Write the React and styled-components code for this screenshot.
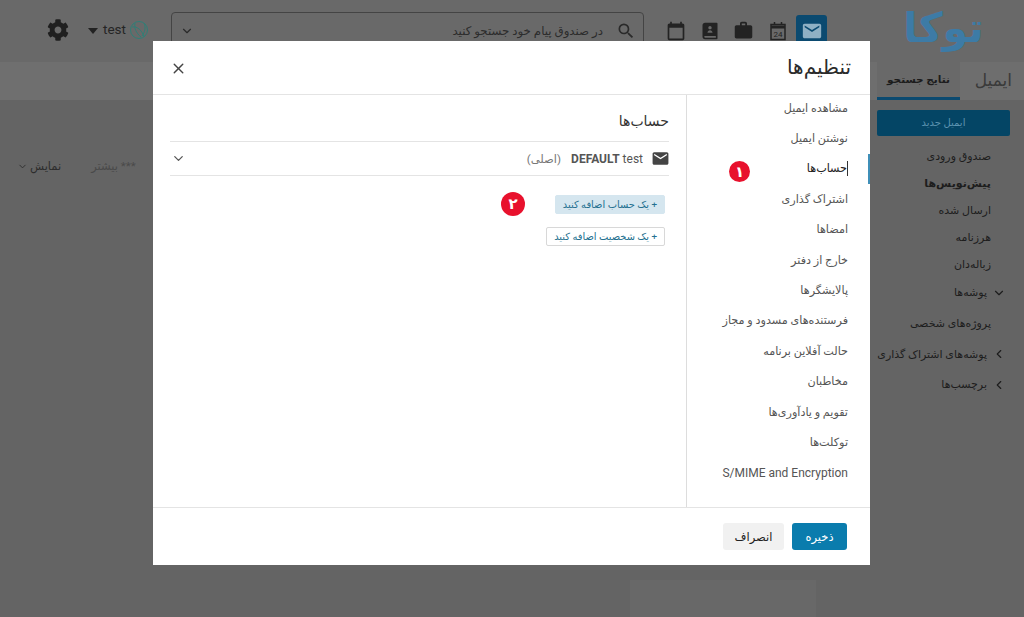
import React from "react";
import styled, { createGlobalStyle } from "styled-components";
import { ChevronDown, ChevronLeft, X } from "lucide-react";
import { FaCog } from "react-icons/fa";
import { MdCalendarToday, MdEmail, MdSearch, MdWork } from "react-icons/md";
import { RiContactsBook2Fill } from "react-icons/ri";

const FONT = `Roboto, "DejaVu Sans", sans-serif`;

const GlobalStyle = createGlobalStyle`
    html, body {
        margin: 0;
        height: 100%;
        overflow: hidden;
        background: #636363;
    }
    body {
        font-family: ${FONT};
        direction: rtl;
    }
`;

const Page = styled.div`
    width: 1024px;
    height: 617px;
    display: flex;
    flex-direction: column;
    background: #646464;
    overflow: hidden;
`;

const Header = styled.header`
    height: 62px;
    flex: none;
    display: flex;
    align-items: flex-start;
    background: #696969;
    padding-right: 38px;
    box-sizing: border-box;
`;

const Logo = styled.div`
    width: 85px;
    margin-top: 2px;
    font-size: 41px;
    line-height: 52px;
    font-weight: 700;
    color: #3d7ba6;
    text-align: center;
`;

const AppIcons = styled.nav`
    display: flex;
    align-items: center;
    gap: 3px;
    margin: 15px 74px 0 0;
`;

const AppIcon = styled.div`
    width: 31px;
    height: 31px;
    display: flex;
    align-items: center;
    justify-content: center;
    border-radius: 3px;
    color: ${(p) => (p.$active ? "#8fb0c4" : "#232323")};
    background: ${(p) => (p.$active ? "#0b4a70" : "transparent")};
    font-size: ${(p) => p.$size || 20}px;
`;

const SearchBox = styled.div`
    width: 473px;
    height: 38px;
    margin: 12px 16px 0 0;
    display: flex;
    align-items: center;
    box-sizing: border-box;
    padding: 0 7px 0 8px;
    border: 1px solid #444444;
    border-radius: 4px;
    color: #2a2a2a;
`;

const SearchText = styled.span`
    flex: 1;
    margin-right: 13px;
    font-size: 11.8px;
    color: #2c2c2c;
`;

const Avatar = styled.svg`
    width: 20px;
    height: 20px;
    margin: 20px 22px 0 0;
    flex: none;
`;

const UserName = styled.span`
    margin: 19px 3px 0 0;
    font-size: 13.5px;
    line-height: 20px;
    color: #252525;
`;

const Caret = styled.span`
    width: 0;
    height: 0;
    margin: 28px 5px 0 0;
    border-left: 5px solid transparent;
    border-right: 5px solid transparent;
    border-top: 6px solid #222222;
`;

const Gear = styled.div`
    margin: 19px 19px 0 0;
    font-size: 22px;
    line-height: 22px;
    color: #1f1f1f;
`;

const Columns = styled.div`
    flex: 1;
    display: flex;
    min-height: 0;
`;

const Sidebar = styled.aside`
    width: 154px;
    flex: none;
    box-sizing: border-box;
`;

const Tabs = styled.div`
    height: 38px;
    display: flex;
    align-items: stretch;
    padding-right: 12px;
    background: #6e6e6e;
`;

const Tab = styled.div`
    box-sizing: border-box;
    width: ${(p) => (p.$active ? "83px" : "52px")};
    font-size: ${(p) => (p.$active ? "10.5px" : "17px")};
    line-height: 36px;
    font-weight: ${(p) => (p.$active ? 700 : 400)};
    color: ${(p) => (p.$active ? "#1c1c1c" : "#3a3a3a")};
    text-align: ${(p) => (p.$active ? "center" : "right")};
    background: ${(p) => (p.$active ? "#696969" : "transparent")};
    border-bottom: ${(p) => (p.$active ? "3px solid #0b4a70" : "none")};
    white-space: nowrap;
`;

const NewMail = styled.div`
    height: 26px;
    margin: 10px 14px 0 7px;
    border-radius: 2px;
    background: #044565;
    color: #5d93b0;
    font-size: 10px;
    line-height: 26px;
    text-align: center;
`;

const FolderList = styled.div`
    margin-top: 6.5px;
    display: flex;
    flex-direction: column;
`;

const Folder = styled.div`
    height: ${(p) => (p.$tall ? "30.7px" : "27px")};
    display: flex;
    align-items: center;
    gap: 5px;
    padding-right: ${(p) => (p.$arrow ? "18px" : "33px")};
    font-size: 11px;
    font-weight: ${(p) => (p.$bold ? 700 : 400)};
    color: #1d1d1d;
    white-space: nowrap;

    svg {
        flex: none;
    }
`;

const Main = styled.main`
    flex: 1;
    display: flex;
    flex-direction: column;
`;

const Band = styled.div`
    height: 38px;
    background: #6f6f6f;
`;

const MainToolbar = styled.div`
    display: flex;
    justify-content: flex-end;
    align-items: center;
    gap: 30px;
    margin-top: 59px;
    padding-left: 17px;
    font-size: 11.5px;
    color: #2d2d2d;
`;

const MutedTool = styled.span`
    color: #4a4a4a;
`;

const ToolButton = styled.span`
    display: flex;
    align-items: center;
    gap: 2px;
`;

const FooterPatch = styled.div`
    margin-top: auto;
    align-self: flex-start;
    width: 186px;
    height: 37px;
    margin-right: 54px;
    background: #686868;
`;

const Modal = styled.section`
    position: fixed;
    left: 153px;
    top: 41px;
    width: 717px;
    height: 524px;
    display: flex;
    flex-direction: column;
    background: #ffffff;
`;

const ModalHeader = styled.div`
    height: 54px;
    flex: none;
    box-sizing: border-box;
    display: flex;
    align-items: center;
    justify-content: space-between;
    padding: 0 19px 2px 17px;
    border-bottom: 1px solid #e4e4e4;
`;

const ModalTitle = styled.h1`
    margin: 0;
    font-size: 20px;
    font-weight: 400;
    color: #2b2b2b;
`;

const CloseIcon = styled(X)`
    margin-top: 3px;
    color: #444444;
`;

const ModalBody = styled.div`
    flex: 1;
    display: flex;
    min-height: 0;
`;

const SettingsNav = styled.nav`
    width: 184px;
    flex: none;
    box-sizing: border-box;
    border-left: 1px solid #dddddd;
    display: flex;
    flex-direction: column;
`;

const NavItem = styled.div`
    height: 30.4px;
    flex: none;
    box-sizing: border-box;
    display: flex;
    align-items: center;
    position: relative;
    top: -2px;
    padding-right: 20px;
    font-size: ${(p) => (p.$latin ? "12px" : "11.2px")};
    white-space: nowrap;
    color: ${(p) => (p.$active ? "#222222" : "#555555")};
    border-right: 2px solid ${(p) => (p.$active ? "#3f8fb8" : "transparent")};
`;

const TextCursor = styled.span`
    display: inline-block;
    width: 1px;
    height: 15px;
    background: #333333;
`;

const AccountsPanel = styled.div`
    flex: 1;
    position: relative;
    box-sizing: border-box;
    padding: 0 17px;
`;

const PanelTitle = styled.h2`
    margin: 0;
    height: 46px;
    box-sizing: border-box;
    padding-top: 16px;
    font-size: 14px;
    line-height: 20px;
    font-weight: 400;
    color: #333333;
`;

const AccountRow = styled.div`
    height: 35px;
    box-sizing: border-box;
    display: flex;
    align-items: center;
    border-top: 1px solid #e4e4e4;
    border-bottom: 1px solid #e4e4e4;
    color: #555555;
`;

const AccountMail = styled(MdEmail)`
    font-size: 19px;
    color: #444444;
    margin-right: -1px;
`;

const AccountName = styled.span`
    direction: ltr;
    margin-right: 8px;
    font-size: 12px;
    color: #555555;
`;

const Primary = styled.span`
    margin-right: 10px;
    font-size: 11.5px;
    color: #777777;
`;

const RowChevron = styled(ChevronDown)`
    margin-right: auto;
    margin-left: 1px;
    color: #555555;
`;

const AddButtons = styled.div`
    display: flex;
    flex-direction: column;
    align-items: flex-start;
    gap: 13px;
    margin: 19px 4px 0 0;
`;

const AddButton = styled.div`
    height: 19px;
    box-sizing: border-box;
    padding: 0 7px;
    display: flex;
    align-items: center;
    border-radius: 2px;
    font-size: 9.9px;
    white-space: nowrap;
    color: #23708f;
    background: ${(p) => (p.$primary ? "#d5e6ef" : "#ffffff")};
    border: 1px solid ${(p) => (p.$primary ? "#d5e6ef" : "#d8d8d8")};
`;

const Badge = styled.span`
    position: absolute;
    width: ${(p) => p.$size}px;
    height: ${(p) => p.$size}px;
    display: flex;
    align-items: center;
    justify-content: center;
    border-radius: 50%;
    background: #e8112d;
    color: #ffffff;
    font-size: 15px;
    font-weight: 700;
`;

const AccountBadge = styled(Badge)`
    left: 348px;
    top: 97px;
`;

const NavBadge = styled(Badge)`
    left: 576px;
    top: 66px;
`;

const ModalFooter = styled.div`
    height: 58px;
    flex: none;
    box-sizing: border-box;
    display: flex;
    align-items: center;
    gap: 8px;
    padding: 0 23px;
    border-top: 1px solid #e4e4e4;
`;

const FooterButton = styled.button`
    height: 27px;
    width: ${(p) => (p.$primary ? "55px" : "61px")};
    padding: 0;
    border: none;
    border-radius: 3px;
    font-family: ${FONT};
    font-size: 11.5px;
    color: ${(p) => (p.$primary ? "#ffffff" : "#222222")};
    background: ${(p) => (p.$primary ? "#0a7cad" : "#f1f1f1")};
`;

const navItems = [
    "مشاهده ایمیل",
    "نوشتن ایمیل",
    "حساب‌ها",
    "اشتراک گذاری",
    "امضاها",
    "خارج از دفتر",
    "پالایشگرها",
    "فرستنده‌های مسدود و مجاز",
    "حالت آفلاین برنامه",
    "مخاطبان",
    "تقویم و یادآوری‌ها",
    "توکلت‌ها",
    "S/MIME and Encryption",
];

function DayIcon() {
    return (
        <svg width="18" height="20" viewBox="0 0 18 20" fill="none" stroke="#232323">
            <rect x="2" y="3.5" width="14" height="15" strokeWidth="1.5" />
            <path d="M2 6h14" strokeWidth="3" />
            <path d="M5.5 1v3M12.5 1v3" strokeWidth="1.5" />
            <text x="9" y="16" fontSize="8" fill="#232323" stroke="none" textAnchor="middle" fontFamily="Roboto, sans-serif">24</text>
        </svg>
    );
}

function App() {
    return (
        <Page>
            <GlobalStyle />
            <Header>
                <Logo>توکا</Logo>
                <AppIcons>
                    <AppIcon $active $size={22}><MdEmail /></AppIcon>
                    <AppIcon><DayIcon /></AppIcon>
                    <AppIcon $size={21}><MdWork /></AppIcon>
                    <AppIcon><RiContactsBook2Fill /></AppIcon>
                    <AppIcon><MdCalendarToday /></AppIcon>
                </AppIcons>
                <SearchBox>
                    <MdSearch size={20} />
                    <SearchText>در صندوق پیام خود جستجو کنید</SearchText>
                    <ChevronDown size={14} />
                </SearchBox>
                <Avatar viewBox="0 0 20 20" fill="none" stroke="#2f7f77" strokeWidth="1">
                    <circle cx="10" cy="10" r="8.5" />
                    <path d="M3 7c5-1 10 3 12 10M15 3c2 4 1 9-2 13M6 3c-1 5 1 10 6 14" />
                </Avatar>
                <UserName>test</UserName>
                <Caret />
                <Gear><FaCog /></Gear>
            </Header>
            <Columns>
                <Sidebar>
                    <Tabs>
                        <Tab>ایمیل</Tab>
                        <Tab $active>نتایج جستجو</Tab>
                    </Tabs>
                    <NewMail>ایمیل جدید</NewMail>
                    <FolderList>
                        <Folder>صندوق ورودی</Folder>
                        <Folder $bold>پیش‌نویس‌ها</Folder>
                        <Folder>ارسال شده</Folder>
                        <Folder>هرزنامه</Folder>
                        <Folder>زباله‌دان</Folder>
                        <Folder $arrow $tall><ChevronDown size={14} />پوشه‌ها</Folder>
                        <Folder $tall>پروژه‌های شخصی</Folder>
                        <Folder $arrow $tall><ChevronLeft size={14} />پوشه‌های اشتراک گذاری</Folder>
                        <Folder $arrow $tall><ChevronLeft size={14} />برچسب‌ها</Folder>
                    </FolderList>
                </Sidebar>
                <Main>
                    <Band />
                    <MainToolbar>
                        <MutedTool>*** بیشتر</MutedTool>
                        <ToolButton>نمایش <ChevronDown size={11} /></ToolButton>
                    </MainToolbar>
                    <FooterPatch />
                </Main>
            </Columns>
            <Modal>
                <ModalHeader>
                    <ModalTitle>تنظیم‌ها</ModalTitle>
                    <CloseIcon size={17} />
                </ModalHeader>
                <ModalBody>
                    <SettingsNav>
                        {navItems.map((item) => (
                            <NavItem
                                key={item}
                                $active={item === "حساب‌ها"}
                                $latin={item.startsWith("S/")}
                            >
                                {item === "حساب‌ها" && <TextCursor />}
                                {item}
                            </NavItem>
                        ))}
                    </SettingsNav>
                    <AccountsPanel>
                        <PanelTitle>حساب‌ها</PanelTitle>
                        <AccountRow>
                            <AccountMail />
                            <AccountName><strong>DEFAULT</strong> test</AccountName>
                            <Primary>(اصلی)</Primary>
                            <RowChevron size={15} />
                        </AccountRow>
                        <AddButtons>
                            <AddButton $primary>+ یک حساب اضافه کنید</AddButton>
                            <AddButton>+ یک شخصیت اضافه کنید</AddButton>
                        </AddButtons>
                        <AccountBadge $size={24}>۲</AccountBadge>
                        <NavBadge $size={21}>۱</NavBadge>
                    </AccountsPanel>
                </ModalBody>
                <ModalFooter>
                    <FooterButton $primary>ذخیره</FooterButton>
                    <FooterButton>انصراف</FooterButton>
                </ModalFooter>
            </Modal>
        </Page>
    );
}

export default App;
